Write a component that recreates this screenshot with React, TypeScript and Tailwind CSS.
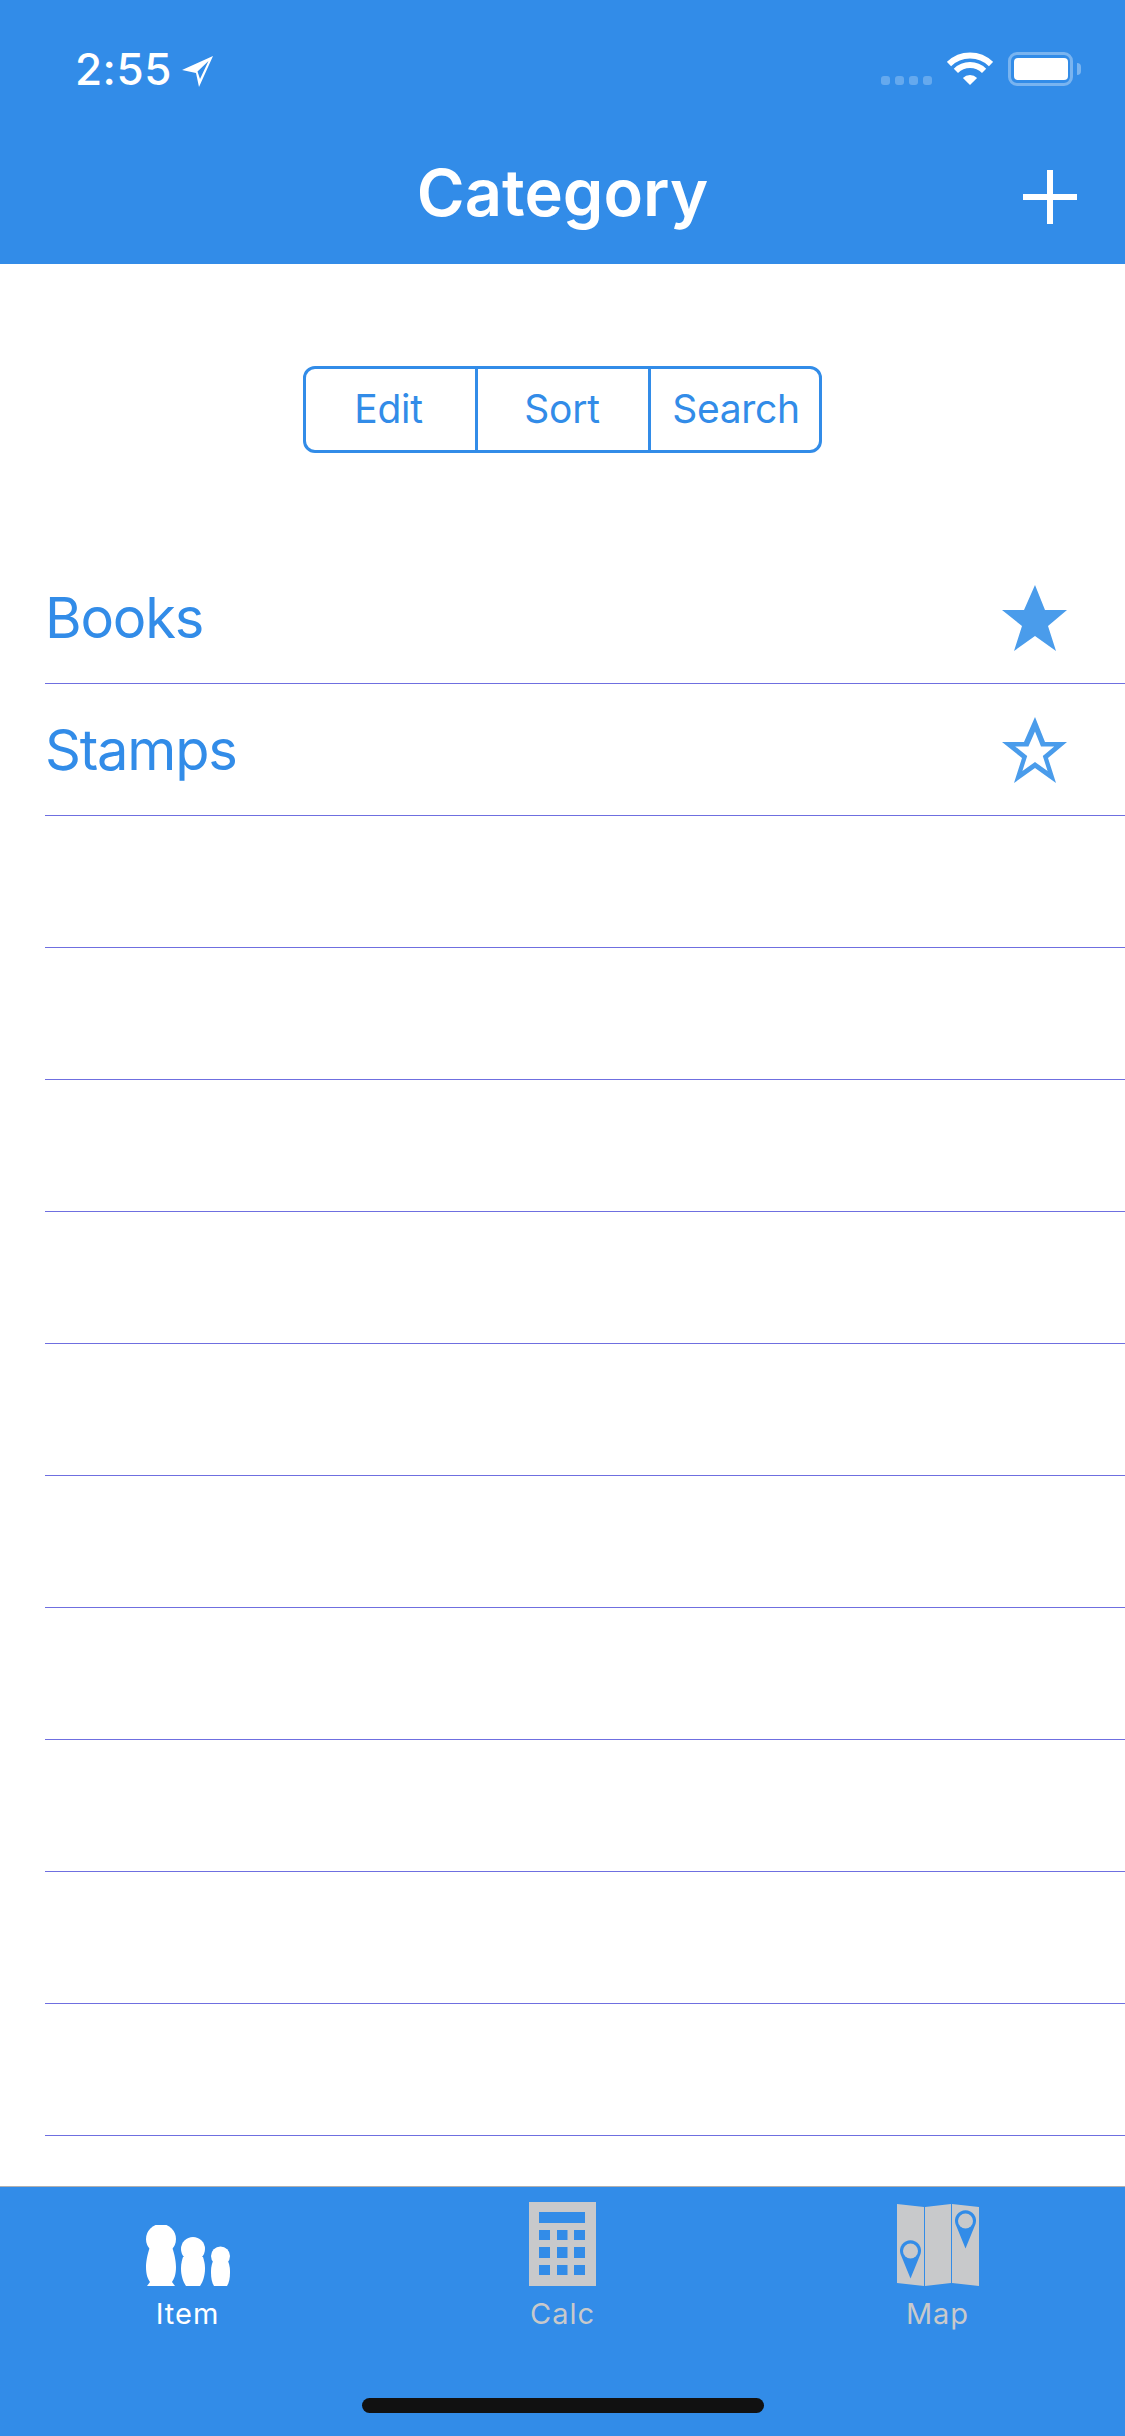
const rows = ["Books", "Stamps", "", "", "", "", "", "", "", "", "", ""];

const starOuter = "M33 0L43 25L65 25L46 41L54 66L33 51L12 66L20 41L0 25L22 25Z";
const starHole = "M33 14.400L39 29.400L52.200 29.400L40.800 39L45.600 54L33 45L20.400 54L25.200 39L13.200 29.400L26.400 29.400Z";

const Star = ({ filled }: { filled: boolean }) => (
  <svg width="65" height="66" viewBox="0 0 65 66" className="shrink-0 text-[#4a9ceb]">
    <path d={filled ? starOuter : starOuter + starHole} fill="currentColor" fillRule="evenodd" />
  </svg>
);

const StatusBar = () => (
  <div className="flex h-[88px] items-start justify-between pt-[52px] pl-[75px] pr-[44px]">
    <div className="flex items-start gap-[10px]">
      <span className="text-[44px] font-medium leading-[34px] tracking-[0.5px]">2:55</span>
      <svg width="31" height="31" viewBox="0 0 31 31" className="mt-[4px]">
        <path d="M31 0L0 14L14 17L17 31ZM26.500 5L15.500 15.500L18 23Z" fill="white" fillRule="evenodd" />
      </svg>
    </div>
    <div className="flex items-start">
      <div className="mt-[24px] mr-[15px] flex gap-[5px]">
        {[0, 1, 2, 3].map((i) => (
          <div key={i} className="h-[9px] w-[9px] rounded-[3px] bg-white/25" />
        ))}
      </div>
      <svg width="46" height="33" viewBox="0 0 46 33" className="mr-[15px]">
        <path d="M2 12A30 30 0 0 1 44 12M8.900 18.900A20 20 0 0 1 37.100 18.900" fill="none" stroke="white" strokeWidth="6" />
        <path d="M23 33L15.900 25.900A10 10 0 0 1 30.100 25.900Z" fill="white" />
      </svg>
      <div className="flex h-[34px] w-[65px] items-center justify-center rounded-[9px] border-[3px] border-white/35">
        <div className="h-[22px] w-[54px] rounded-[4px] bg-white" />
      </div>
      <div className="mt-[11px] ml-[4px] h-[12px] w-[4px] rounded-r-[4px] bg-white/35" />
    </div>
  </div>
);

const NavBar = () => (
  <div className="relative flex h-[176px] items-center justify-center pt-[32px]">
    <span className="text-[65px] font-semibold leading-none">Category</span>
    <svg width="54" height="54" viewBox="0 0 54 54" className="absolute right-[48px] top-[82px]">
      <path d="M27 0V54M0 27H54" stroke="white" strokeWidth="6" />
    </svg>
  </div>
);

const Segmented = () => (
  <div className="mt-[102px] mb-[99px] flex h-[87px] w-[519px] self-center rounded-[12px] border-[3px] border-[#328ce8] text-[39px] tracking-[-0.3px] text-[#328ce8]">
    <div className="flex w-[172px] items-center justify-center border-r-[3px] border-[#328ce8] pr-[4px]">Edit</div>
    <div className="flex w-[173px] items-center justify-center border-r-[3px] border-[#328ce8] pr-[2px]">Sort</div>
    <div className="flex flex-1 items-center justify-center pl-[2px]">Search</div>
  </div>
);

const Row = ({ label, index }: { label: string; index: number }) => (
  <div className="ml-[45px] flex h-[132px] items-center justify-between border-b border-[#6f6fe0] pr-[58px]">
    <span className="text-[56px] tracking-[-1.2px] text-[#328ce8]">{label}</span>
    {index < 2 && <Star filled={index === 0} />}
  </div>
);

const Dolls = () => (
  <svg width="84" height="61" viewBox="0 0 84 61" fill="white">
    <circle cx="15" cy="14" r="15" />
    <path d="M4 22C1 30 0 38 0 42C0 50 2 54 4 57L1 61L29 61L26 57C28 54 30 50 30 42C30 38 29 30 26 22Z" />
    <circle cx="47" cy="24" r="12" />
    <path d="M37 32C35 38 35 42 35 44C35 50 37 57 40 61L54 61C57 57 59 50 59 44C59 42 59 38 57 32Z" />
    <circle cx="74.500" cy="31" r="9.500" />
    <path d="M67 36C65 41 65 44 65 48C65 53 66 58 68 61L81 61C83 58 84 53 84 48C84 44 84 41 82 36Z" />
  </svg>
);

const Calc = () => (
  <svg width="67" height="84" viewBox="0 0 67 84">
    <path
      fillRule="evenodd"
      fill="#c8c9cb"
      d="M0 0H67V84H0ZM10 10V21H56V10ZM10 28V38H21V28ZM28 28V38H38.500V28ZM45 28V38H56V28ZM10 45V56H21V45ZM28 45V56H38.500V45ZM45 45V56H56V45ZM10 63V73H21V63ZM28 63V73H38.500V63ZM45 63V73H56V63Z"
    />
  </svg>
);

const Pin = ({ cx, cy }: { cx: number; cy: number }) => (
  <>
    <path d={`M${cx - 10} ${cy + 3}A10.500 10.500 0 1 1 ${cx + 10} ${cy + 3}L${cx} ${cy + 27.500}Z`} fill="#328ce8" />
    <circle cx={cx} cy={cy} r="7.500" fill="#c8c9cb" />
  </>
);

const MapIcon = () => (
  <svg width="82" height="82" viewBox="0 0 82 82">
    <path d="M0 0L27 3V82L0 79ZM28 3L54 0V79L28 82ZM55 0L82 3V82L55 79Z" fill="#c8c9cb" />
    <Pin cx={13.5} cy={47} />
    <Pin cx={68.5} cy={17} />
  </svg>
);

const Tab = ({ label, active, children }: { label: string; active?: boolean; children: React.ReactNode }) => (
  <div className="flex flex-1 flex-col items-center">
    <div className="flex h-[84px] items-end">{children}</div>
    <span className={`mt-[10px] text-[29px] leading-[36px] tracking-[1px] ${active ? "text-white" : "text-[#c8c9cb]"}`}>
      {label}
    </span>
  </div>
);

export default function App() {
  return (
    <div className="flex h-[2436px] w-[1125px] flex-col overflow-hidden bg-white font-['Inter',sans-serif]">
      <div className="h-[264px] shrink-0 bg-[#328ce8] text-white">
        <StatusBar />
        <NavBar />
      </div>

      <div className="flex flex-1 flex-col">
        <Segmented />
        <div className="flex flex-col">
          {rows.map((label, i) => (
            <Row key={i} label={label} index={i} />
          ))}
        </div>
      </div>

      <div className="flex h-[250px] shrink-0 flex-col border-t border-[#b0b0b0] bg-[#328ce8]">
        <div className="flex pt-[15px]">
          <Tab label="Item" active>
            <Dolls />
          </Tab>
          <Tab label="Calc">
            <Calc />
          </Tab>
          <Tab label="Map">
            <MapIcon />
          </Tab>
        </div>
        <div className="mt-[66px] h-[15px] w-[402px] self-center rounded-full bg-[#111111]" />
      </div>
    </div>
  );
}
